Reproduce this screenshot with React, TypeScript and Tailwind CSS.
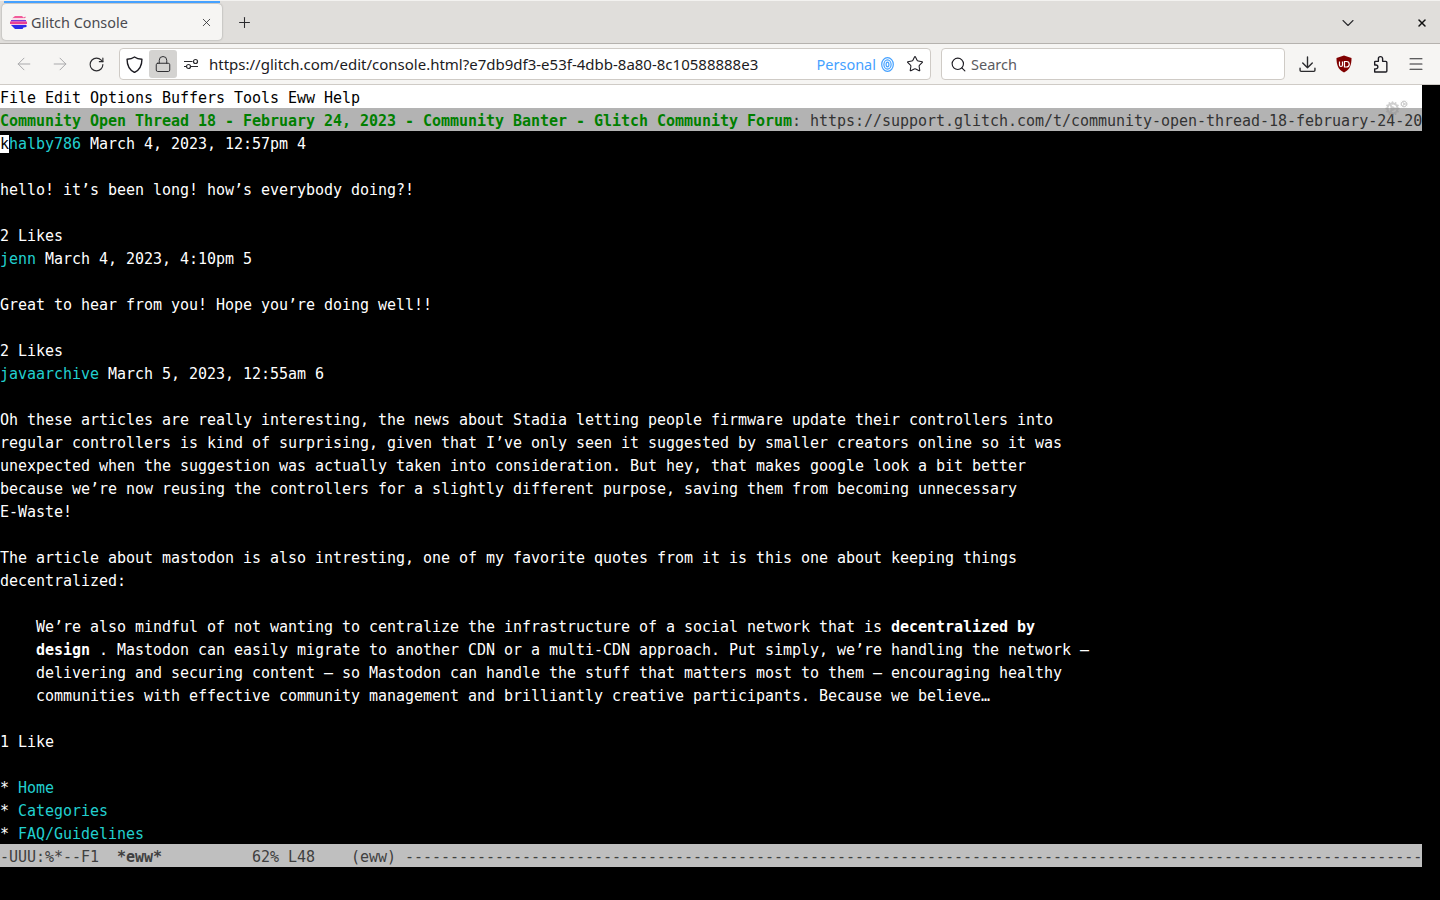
import { ArrowLeft, ArrowRight, RotateCw, Lock, Star, Search, Menu, X, Plus, ChevronDown, Cog } from 'lucide-react';

const Link = ({ children }: { children: string }) => <span className="text-[#22cfcf]">{children}</span>;

function Row({ children }: { children?: React.ReactNode }) {
  return <div className="h-[23px] leading-[27px] whitespace-pre overflow-hidden">{children}</div>;
}

function ToolButton({ children, className = 'w-9' }: { children: React.ReactNode; className?: string }) {
  return <div className={`${className} h-8 shrink-0 flex items-center justify-center`}>{children}</div>;
}

function Favicon() {
  return (
    <svg width="17" height="13" viewBox="0 0 17 13" className="shrink-0">
      <path d="M5 0h7l1.500 1.500 2-1v1.500H2.500z" fill="#f25c9a" />
      <path d="M2 2.500h13v1H2z" fill="#f9c7dc" />
      <path d="M1 4h15v1.500H1z" fill="#7a35d8" />
      <path d="M0 5.500h17v2.500H0z" fill="#e83f96" />
      <path d="M1 8h15v1H1z" fill="#f9c7dc" />
      <path d="M1 9h15.500v2l-3 .500-1 1.500H5L3 11z" fill="#2a2ae8" />
    </svg>
  );
}

function UblockIcon() {
  return (
    <svg width="16" height="18" viewBox="0 0 16 18">
      <path d="M8 .5 15.500 3c0 7-1.500 11.500-7.500 14.500C2 14.500.5 10 .5 3z" fill="#800000" />
      <path d="M3.500 6.500v3.500a1.500 1.500 0 0 0 3 0V6.500M8.500 6.500h2a2.200 2.200 0 0 1 0 5.500h-2z" fill="none" stroke="#fff" strokeWidth="1.200" />
    </svg>
  );
}

function SiteSettingsIcon() {
  return (
    <svg width="16" height="16" viewBox="0 0 16 16" fill="none" stroke="#2b2b2e" strokeWidth="1.200">
      <path d="M1 5.500h8.500M1 10.500h2M8 10.500h7" />
      <circle cx="12.500" cy="5.500" r="2" />
      <circle cx="5.500" cy="10.500" r="2" />
    </svg>
  );
}

function ShieldIcon() {
  return (
    <svg width="17" height="17" viewBox="0 0 16 16" fill="none" stroke="#1c1b22" strokeWidth="1.300" strokeLinejoin="round">
      <path d="M8 1C10 2.500 12.500 3 15 3c0 6-2 10-7 12.500C3 13 1 9 1 3c2.500 0 5-.5 7-2z" />
    </svg>
  );
}

function DownloadIcon() {
  return (
    <svg width="17" height="17" viewBox="0 0 16 16" fill="none" stroke="#2b2b2e" strokeWidth="1.300" strokeLinecap="round" strokeLinejoin="round">
      <path d="M8 1v10M3.500 6.500 8 11l4.500-4.500M1 11.500v2a1 1 0 0 0 1 1h12a1 1 0 0 0 1-1v-2" />
    </svg>
  );
}

function PuzzleIcon() {
  return (
    <svg width="17" height="18" viewBox="0 0 16 17" fill="none" stroke="#1c1b22" strokeWidth="1.300" strokeLinejoin="round">
      <path d="M2.500 16h10.500a1 1 0 0 0 1-1V7a1 1 0 0 0-1-1h-3V3.500a2 2 0 0 0-4 0V6H3a.5.5 0 0 0-.5.5v3h1.200a1.800 1.800 0 0 1 0 3.600H2.500z" />
    </svg>
  );
}

function FingerprintIcon() {
  return (
    <svg width="13" height="15" viewBox="0 0 13 15" fill="none" stroke="#45a1ff" strokeWidth="1.200" className="ml-[5px]">
      <ellipse cx="6.500" cy="7.500" rx="5.800" ry="6.800" />
      <ellipse cx="6.500" cy="7.500" rx="3.600" ry="4.600" />
      <ellipse cx="6.500" cy="7.500" rx="1.400" ry="2.400" />
    </svg>
  );
}

export default function App() {
  return (
    <div className="h-[900px] w-[1440px] overflow-hidden flex flex-col bg-black font-['Noto_Sans',sans-serif]">
      {/* Tab strip */}
      <div className="relative h-[44px] shrink-0 flex items-start bg-[#e0dedb] border-t border-[#f3f2f0] border-b border-b-[#b5b2ae] pl-[2px]">
        <div className="absolute left-[4px] top-0 h-[2px] w-[216px] bg-[#45a1ff]" />
        <div className="mt-[3px] w-[220px] h-[36px] flex items-center pl-[8px] pr-[8px] rounded-[4px] bg-[#f6f5f3] shadow-[0_0_2px_rgba(0,0,0,0.35)]">
          <Favicon />
          <span className="ml-[4px] pt-px text-[14.400px] text-[#4a4a4f] flex-1">Glitch Console</span>
          <X size={13} strokeWidth={1.500} className="text-[#2b2b2e] mr-[1px]" />
        </div>
        <div className="ml-[14px] mt-[13px]"><Plus size={17} strokeWidth={1.500} className="text-[#2b2b2e]" /></div>
        <div className="ml-auto mt-[12px] flex items-center">
          <ChevronDown size={20} strokeWidth={1.300} className="text-[#2b2b2e] -ml-px" />
          <X size={12} strokeWidth={3} className="ml-[58px] mr-[12px] text-[#111]" />
        </div>
      </div>

      {/* Toolbar */}
      <div className="h-[41px] shrink-0 flex items-center pl-[6px] bg-[#f6f5f3] border-b border-[#cfcbc6]">
        <ToolButton><ArrowLeft size={20} strokeWidth={1.200} className="text-[#a9a9ab]" /></ToolButton>
        <ToolButton><ArrowRight size={20} strokeWidth={1.200} className="text-[#a9a9ab]" /></ToolButton>
        <ToolButton><RotateCw size={17} strokeWidth={1.600} className="text-[#2b2b2e]" /></ToolButton>
        <div className="ml-[5px] w-[812px] h-8 flex items-center bg-white border border-[#cfcbc6] rounded-[4px] pl-[6px]">
          <div className="w-[17px] flex justify-center"><ShieldIcon /></div>
          <div className="ml-[6px] w-[28px] h-[28px] rounded-[3px] bg-[#d4d3d1] flex items-center justify-center"><Lock size={18} strokeWidth={1.300} className="text-[#2b2b2e]" /></div>
          <div className="ml-[6px] w-[16px]"><SiteSettingsIcon /></div>
          <span className="ml-[10px] text-[15px] text-[#1c1b22] whitespace-pre">https://glitch.com/edit/console.html?e7db9df3-e53f-4dbb-8a80-8c10588888e3</span>
          <span className="ml-auto pt-px text-[14.500px] text-[#45a1ff]">Personal</span>
          <FingerprintIcon />
          <Star size={18} strokeWidth={1.400} className="ml-[12px] mr-[6px] text-[#1c1b22]" />
        </div>
        <div className="ml-[10px] w-[344px] h-8 flex items-center bg-white border border-[#cfcbc6] rounded-[4px] pl-[8px]">
          <Search size={17} strokeWidth={1.600} className="text-[#1c1b22]" />
          <span className="ml-[4px] pt-px text-[14.500px] text-[#5b5b60]">Search</span>
        </div>
        <div className="ml-[4px] flex">
          <ToolButton><DownloadIcon /></ToolButton>
          <ToolButton className="w-[37px]"><UblockIcon /></ToolButton>
          <ToolButton className="w-[37px]"><PuzzleIcon /></ToolButton>
          <ToolButton className="w-[34px]"><Menu size={18} strokeWidth={1.400} className="text-[#2b2b2e]" /></ToolButton>
        </div>
      </div>

      {/* Emacs frame */}
      <div className="relative w-[1422px] flex-1 font-['DejaVu_Sans_Mono',monospace] text-[15px] tracking-[-0.03px] text-white">
        <div className="h-[23px] leading-[27px] bg-white text-black whitespace-pre overflow-hidden">File Edit Options Buffers Tools Eww Help</div>
        <div className="h-[23px] leading-[27px] bg-[#b3b3b3] text-[#333] whitespace-pre overflow-hidden">
          <span className="font-bold text-[#007f00]">Community Open Thread 18 - February 24, 2023 - Community Banter - Glitch Community Forum</span>: https://support.glitch.com/t/community-open-thread-18-february-24-20
        </div>
        <Row><span className="bg-white text-black">k</span><Link>halby786</Link> March 4, 2023, 12:57pm 4</Row>
        <Row />
        <Row>hello! it’s been long! how’s everybody doing?!</Row>
        <Row />
        <Row>2 Likes</Row>
        <Row><Link>jenn</Link> March 4, 2023, 4:10pm 5</Row>
        <Row />
        <Row>Great to hear from you! Hope you’re doing well!!</Row>
        <Row />
        <Row>2 Likes</Row>
        <Row><Link>javaarchive</Link> March 5, 2023, 12:55am 6</Row>
        <Row />
        <Row>Oh these articles are really interesting, the news about Stadia letting people firmware update their controllers into</Row>
        <Row>regular controllers is kind of surprising, given that I’ve only seen it suggested by smaller creators online so it was</Row>
        <Row>unexpected when the suggestion was actually taken into consideration. But hey, that makes google look a bit better</Row>
        <Row>because we’re now reusing the controllers for a slightly different purpose, saving them from becoming unnecessary</Row>
        <Row>E-Waste!</Row>
        <Row />
        <Row>The article about mastodon is also intresting, one of my favorite quotes from it is this one about keeping things</Row>
        <Row>decentralized:</Row>
        <Row />
        <Row>{'    '}We’re also mindful of not wanting to centralize the infrastructure of a social network that is <b>decentralized by</b></Row>
        <Row>{'    '}<b>design</b> . Mastodon can easily migrate to another CDN or a multi-CDN approach. Put simply, we’re handling the network —</Row>
        <Row>{'    '}delivering and securing content — so Mastodon can handle the stuff that matters most to them — encouraging healthy</Row>
        <Row>{'    '}communities with effective community management and brilliantly creative participants. Because we believe…</Row>
        <Row />
        <Row>1 Like</Row>
        <Row />
        <Row>* <Link>Home</Link></Row>
        <Row>* <Link>Categories</Link></Row>
        <Row>* <Link>FAQ/Guidelines</Link></Row>
        <div className="h-[23px] leading-[27px] bg-[#bfbfbf] text-[#404040] whitespace-pre overflow-hidden">{'-UUU:%*--F1  '}<span className="font-bold">*eww*</span>{'          62% L48    (eww) ' + '-'.repeat(113)}</div>
        {/* faint gear overlay sitting on the menu bar corner */}
        <div className="absolute right-[14px] top-[16px] flex opacity-40 text-[#8a8a8a]">
          <Cog size={15} strokeWidth={3} />
          <Cog size={8} strokeWidth={3} className="-mt-px" />
        </div>
      </div>
    </div>
  );
}
